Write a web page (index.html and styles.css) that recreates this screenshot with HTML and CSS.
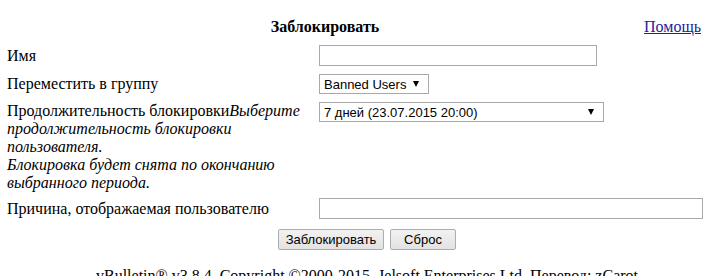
FILE: index.html
```html
<!DOCTYPE html>
<html lang="ru">
<head>
    <meta charset="UTF-8">
    <title>Заблокировать</title>
    <link rel="stylesheet" href="styles.css">
</head>
<body>
    <div class="page">
        <div class="head-row">
            <div class="title">Заблокировать</div>
            <div class="help"><a href="#">Помощь</a></div>
        </div>

        <form class="ban-form">
            <div class="row">
                <label class="label" for="username">Имя</label>
                <div class="field"><input type="text" id="username" class="text-input name-input"></div>
            </div>
            <div class="row">
                <label class="label" for="usergroup">Переместить в группу</label>
                <div class="field">
                    <span class="select-wrap group-select">
                        <select id="usergroup"><option>Banned Users</option></select>
                    </span>
                </div>
            </div>
            <div class="row row-top">
                <label class="label" for="period">Продолжительность блокировки<em>Выберите продолжительность блокировки пользователя.<br>Блокировка будет снята по окончанию выбранного периода.</em></label>
                <div class="field">
                    <span class="select-wrap period-select">
                        <select id="period"><option>7 дней (23.07.2015 20:00)</option></select>
                    </span>
                </div>
            </div>
            <div class="row">
                <label class="label" for="reason">Причина, отображаемая пользователю</label>
                <div class="field"><input type="text" id="reason" class="text-input reason-input"></div>
            </div>
            <div class="buttons">
                <button type="submit" class="btn btn-ban">Заблокировать</button>
                <button type="reset" class="btn btn-reset">Сброс</button>
            </div>
        </form>

        <div class="footer">vBulletin® v3.8.4, Copyright ©2000-2015, Jelsoft Enterprises Ltd. Перевод: zCarot</div>
    </div>
</body>
</html>
```

FILE: styles.css
```css
* {
    box-sizing: border-box;
}

body {
    margin: 0;
    background: #fff;
    color: #000;
    font-family: "Liberation Serif", "Times New Roman", serif;
    font-size: 16px;
    overflow: hidden;
}

.page {
    width: 734px;
}

.head-row {
    display: flex;
    padding-top: 18px;
}

.title {
    flex: 1;
    text-align: center;
    font-weight: bold;
    padding-left: 6px;
}

.help {
    width: 90px;
}

.help a {
    color: #22229c;
}

.ban-form {
    margin-top: 9px;
}

.row {
    display: grid;
    grid-template-columns: 319px 1fr;
    align-items: center;
    margin-bottom: 8px;
}

.row-top {
    align-items: start;
    margin-bottom: 6px;
}

.label {
    padding: 0 12px 0 7px;
}

.label em {
    font-style: italic;
}

.text-input {
    display: block;
    height: 21px;
    border: 1px solid #a9a9a9;
    font: 13px Arial, "Liberation Sans", sans-serif;
    padding: 1px 3px;
}

.name-input {
    width: 278px;
}

.reason-input {
    width: 384px;
}

.select-wrap {
    position: relative;
    display: inline-block;
    vertical-align: top;
}

.select-wrap select {
    appearance: none;
    -webkit-appearance: none;
    display: block;
    width: 100%;
    height: 20px;
    border: 1px solid #a9a9a9;
    border-radius: 0;
    background: #fff;
    font: 13px Arial, "Liberation Sans", sans-serif;
    color: #000;
    padding: 0 20px 0 4px;
}

.select-wrap::after {
    content: "";
    position: absolute;
    right: 10px;
    top: 7px;
    border-left: 3px solid transparent;
    border-right: 3px solid transparent;
    border-top: 6px solid #000;
}

.group-select {
    width: 110px;
}

.period-select {
    width: 285px;
}

.buttons {
    display: flex;
    justify-content: center;
    gap: 6px;
    margin-top: 10px;
}

.btn {
    height: 21px;
    border: 1px solid #adadad;
    border-radius: 2px;
    background: linear-gradient(to bottom, #f2f2f2, #e2e2e2);
    font: 13px Arial, "Liberation Sans", sans-serif;
    color: #000;
    padding: 0 6px;
}

.btn-ban {
    width: 106px;
}

.btn-reset {
    width: 66px;
}

.footer {
    margin-top: 17px;
    text-align: center;
}
```
